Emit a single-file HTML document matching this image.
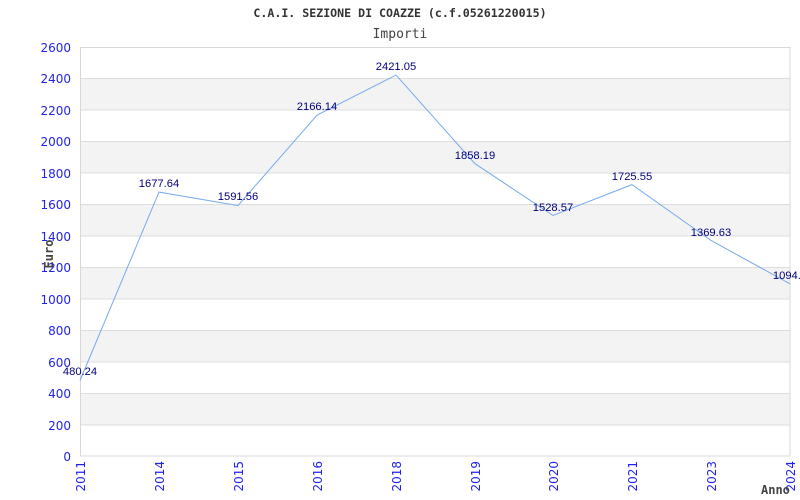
<!DOCTYPE html>
<html><head><meta charset="utf-8"><style>html,body{margin:0;padding:0;background:#fff;width:800px;height:500px;overflow:hidden}</style></head>
<body>
<svg width="800" height="500" xmlns="http://www.w3.org/2000/svg">
<rect width="800" height="500" fill="#fff"/>
<g fill="#f3f3f3">
<rect x="80" y="78.5" width="710" height="31.5"/>
<rect x="80" y="141.5" width="710" height="31.5"/>
<rect x="80" y="204.5" width="710" height="31.5"/>
<rect x="80" y="267.5" width="710" height="31.5"/>
<rect x="80" y="330.5" width="710" height="31.5"/>
<rect x="80" y="393.5" width="710" height="31.5"/>
</g>
<g stroke="#dddddd" stroke-width="1">
<line x1="80" x2="790" y1="78.5" y2="78.5"/><line x1="80" x2="790" y1="110" y2="110"/>
<line x1="80" x2="790" y1="141.5" y2="141.5"/><line x1="80" x2="790" y1="173" y2="173"/>
<line x1="80" x2="790" y1="204.5" y2="204.5"/><line x1="80" x2="790" y1="236" y2="236"/>
<line x1="80" x2="790" y1="267.5" y2="267.5"/><line x1="80" x2="790" y1="299" y2="299"/>
<line x1="80" x2="790" y1="330.5" y2="330.5"/><line x1="80" x2="790" y1="362" y2="362"/>
<line x1="80" x2="790" y1="393.5" y2="393.5"/><line x1="80" x2="790" y1="425" y2="425"/>
</g>
<rect x="80.5" y="47.5" width="709.5" height="408.5" fill="none" stroke="#d8d8d8"/>
<polyline fill="none" stroke="#77aaee" stroke-width="1" points="80,380.5 159,192.1 238,205.6 317,115.2 396,75.1 475,163.7 553,215.5 632,184.6 711,240.5 790,283.8"/>
<g font-family="Liberation Sans, sans-serif" font-size="11.2" fill="#00007a" text-anchor="middle">
<text x="80" y="375">480.24</text><text x="159" y="187">1677.64</text><text x="238" y="200">1591.56</text>
<text x="317" y="110">2166.14</text><text x="396" y="70">2421.05</text><text x="475" y="159">1858.19</text>
<text x="553" y="211">1528.57</text><text x="632" y="180">1725.55</text><text x="711" y="236">1369.63</text>
<text x="790" y="279">1094.7</text>
</g>
<g font-family="DejaVu Sans, sans-serif" font-size="12" fill="#2222ee" text-anchor="end">
<text x="71" y="52">2600</text><text x="71" y="83">2400</text><text x="71" y="115">2200</text>
<text x="71" y="146">2000</text><text x="71" y="178">1800</text><text x="71" y="209">1600</text>
<text x="71" y="241">1400</text><text x="71" y="272">1200</text><text x="71" y="304">1000</text>
<text x="71" y="335">800</text><text x="71" y="367">600</text><text x="71" y="398">400</text>
<text x="71" y="430">200</text><text x="71" y="461">0</text>
</g>
<g font-family="DejaVu Sans, sans-serif" font-size="12" fill="#2222ee" text-anchor="end">
<text transform="translate(85,461) rotate(-90)">2011</text>
<text transform="translate(164,461) rotate(-90)">2014</text>
<text transform="translate(243,461) rotate(-90)">2015</text>
<text transform="translate(322,461) rotate(-90)">2016</text>
<text transform="translate(401,461) rotate(-90)">2018</text>
<text transform="translate(480,461) rotate(-90)">2019</text>
<text transform="translate(558,461) rotate(-90)">2020</text>
<text transform="translate(637,461) rotate(-90)">2021</text>
<text transform="translate(716,461) rotate(-90)">2023</text>
<text transform="translate(795,461) rotate(-90)">2024</text>
</g>
<text x="400" y="17" text-anchor="middle" font-family="DejaVu Sans Mono, Liberation Mono, monospace" font-weight="bold" font-size="11.6" fill="#333">C.A.I. SEZIONE DI COAZZE (c.f.05261220015)</text>
<text x="400" y="38" text-anchor="middle" font-family="DejaVu Sans Mono, monospace" font-size="13" fill="#444">Importi</text>
<text transform="translate(53,254) rotate(-90)" text-anchor="middle" font-family="DejaVu Sans Mono, monospace" font-weight="bold" font-size="12" fill="#444">Euro</text>
<text x="761" y="494" font-family="DejaVu Sans Mono, monospace" font-weight="bold" font-size="12" fill="#444">Anno</text>
</svg>
</body></html>
